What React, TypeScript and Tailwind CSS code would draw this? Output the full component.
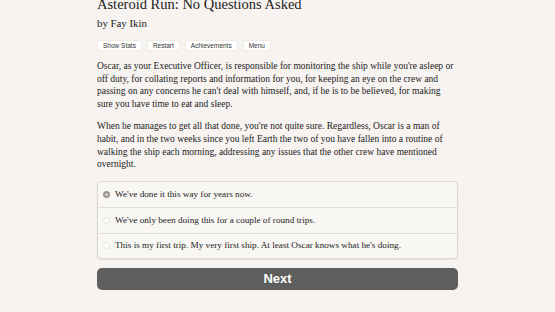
const CHOICES = [
  "We've done it this way for years now.",
  "We've only been doing this for a couple of round trips.",
  "This is my first trip. My very first ship. At least Oscar knows what he's doing.",
];

const BUTTONS = ["Show Stats", "Restart", "Achievements", "Menu"];

export default function App() {
  return (
    <div className="min-h-screen w-full overflow-hidden bg-[#f7f3f0] text-[#222]">
      <div className="mx-auto w-[361px] font-['Liberation_Serif',Georgia,serif]">
        <h1 className="-mt-[5px] text-[14.5px] leading-[18px] text-[#222]">Asteroid Run: No Questions Asked</h1>
        <p className="mt-[3px] text-[10.8px] leading-[14px]">by Fay Ikin</p>

        <div className="mt-[10px] flex gap-[5px] font-['Liberation_Sans',Arial,sans-serif]">
          {BUTTONS.map((b) => (
            <button
              key={b}
              className="rounded-[3px] border border-[#eeeae6] bg-white px-[5px] text-[6.5px] leading-[9px] text-[#333]"
            >
              {b}
            </button>
          ))}
        </div>

        <div className="mt-[9px] space-y-[9.5px] text-[9.5px] leading-[12.7px] text-[#222]">
          <p>
            Oscar, as your Executive Officer, is responsible for monitoring the ship while you're asleep or off
            duty, for collating reports and information for you, for keeping an eye on the crew and passing on any
            concerns he can't deal with himself, and, if he is to be believed, for making sure you have time to eat
            and sleep.
          </p>
          <p>
            When he manages to get all that done, you're not quite sure. Regardless, Oscar is a man of habit, and
            in the two weeks since you left Earth the two of you have fallen into a routine of walking the ship each
            morning, addressing any issues that the other crew have mentioned overnight.
          </p>
        </div>

        <div className="mt-[10px] rounded-[4px] border border-[#dcd8d4] bg-[#f9f7f4] shadow-[0_1px_2px_rgba(0,0,0,0.08)]">
          {CHOICES.map((c, i) => (
            <label
              key={c}
              className={`flex h-[25.3px] items-center gap-[5px] px-[5px] text-[9.2px] text-[#222] ${
                i > 0 ? "border-t border-[#e2deda]" : ""
              }`}
            >
              {i === 0 ? (
                <span className="flex h-[7px] w-[7px] items-center justify-center rounded-full bg-[#9a9693]">
                  <span className="h-[3px] w-[3px] rounded-full bg-[#d8d4d0]" />
                </span>
              ) : (
                <span className="h-[7px] w-[7px] rounded-full border border-[#e4e0dc] bg-white" />
              )}
              <span>{c}</span>
            </label>
          ))}
        </div>

        <button className="mt-[9px] flex h-[22px] w-full items-center justify-center rounded-[5px] bg-[#5e5e5e] font-['Liberation_Sans',Arial,sans-serif] text-[13px] font-bold text-white">
          Next
        </button>
      </div>
    </div>
  );
}
